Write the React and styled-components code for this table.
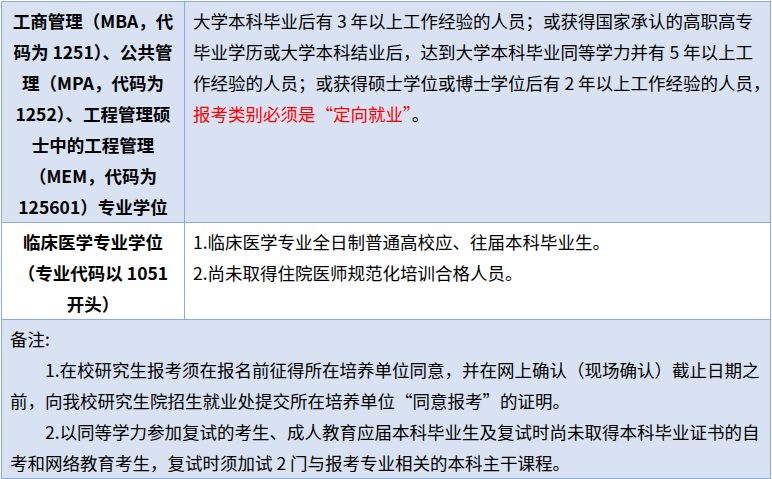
import React from 'react';
import styled, { createGlobalStyle } from 'styled-components';

const GlobalStyle = createGlobalStyle`
    body {
        margin: 0;
        background: #ffffff;
        font-family: "Noto Sans CJK SC", "Noto Sans", sans-serif;
    }
`;

const Table = styled.table`
    width: 770px;
    margin: 1px 0 0 1px;
    border-collapse: collapse;
    table-layout: fixed;
    font-size: 17.5px;
    line-height: 31px;
    color: #000;
`;

const Row = styled.tr`
    background: ${props => (props.$shade ? '#d9e2f3' : '#ffffff')};
`;

const Cell = styled.td`
    border: 1px solid #8eaadb;
    padding: 3px 8px 0;
    vertical-align: top;
`;

const TitleCell = styled(Cell)`
    font-weight: 700;
    text-align: center;
    padding: 3px 2px 0;
`;

const Line = styled.div`
    white-space: nowrap;
    padding-left: ${props => (props.$indent ? '2em' : '0')};
`;

const Red = styled.span`
    color: #ff0000;
`;

const rows = [
    {
        shade: true,
        title: ['工商管理（MBA，代', '码为 1251）、公共管', '理（MPA，代码为', '1252）、工程管理硕', '士中的工程管理', '（MEM，代码为', '125601）专业学位'],
        body: [
            '大学本科毕业后有 3 年以上工作经验的人员；或获得国家承认的高职高专',
            '毕业学历或大学本科结业后，达到大学本科毕业同等学力并有 5 年以上工',
            '作经验的人员；或获得硕士学位或博士学位后有 2 年以上工作经验的人员，',
            <><Red>报考类别必须是“定向就业”</Red>。</>,
        ],
    },
    {
        shade: false,
        title: ['临床医学专业学位', '（专业代码以 1051', '开头）'],
        body: [
            '1.临床医学专业全日制普通高校应、往届本科毕业生。',
            '2.尚未取得住院医师规范化培训合格人员。',
        ],
    },
];

const notes = [
    { text: '备注:' },
    { text: '1.在校研究生报考须在报名前征得所在培养单位同意，并在网上确认（现场确认）截止日期之', indent: true },
    { text: '前，向我校研究生院招生就业处提交所在培养单位“同意报考”的证明。' },
    { text: '2.以同等学力参加复试的考生、成人教育应届本科毕业生及复试时尚未取得本科毕业证书的自', indent: true },
    { text: '考和网络教育考生，复试时须加试 2 门与报考专业相关的本科主干课程。' },
];

const App = () => {
    return (
        <>
            <GlobalStyle />
            <Table>
                <colgroup>
                    <col style={{ width: '183px' }} />
                    <col />
                </colgroup>
                <tbody>
                    {rows.map((row, i) => (
                        <Row key={i} $shade={row.shade}>
                            <TitleCell>
                                {row.title.map((t, j) => <Line key={j}>{t}</Line>)}
                            </TitleCell>
                            <Cell>
                                {row.body.map((t, j) => <Line key={j}>{t}</Line>)}
                            </Cell>
                        </Row>
                    ))}
                    <Row $shade>
                        <Cell colSpan={2}>
                            {notes.map((n, j) => (
                                <Line key={j} $indent={n.indent}>{n.text}</Line>
                            ))}
                        </Cell>
                    </Row>
                </tbody>
            </Table>
        </>
    );
};

export default App;
